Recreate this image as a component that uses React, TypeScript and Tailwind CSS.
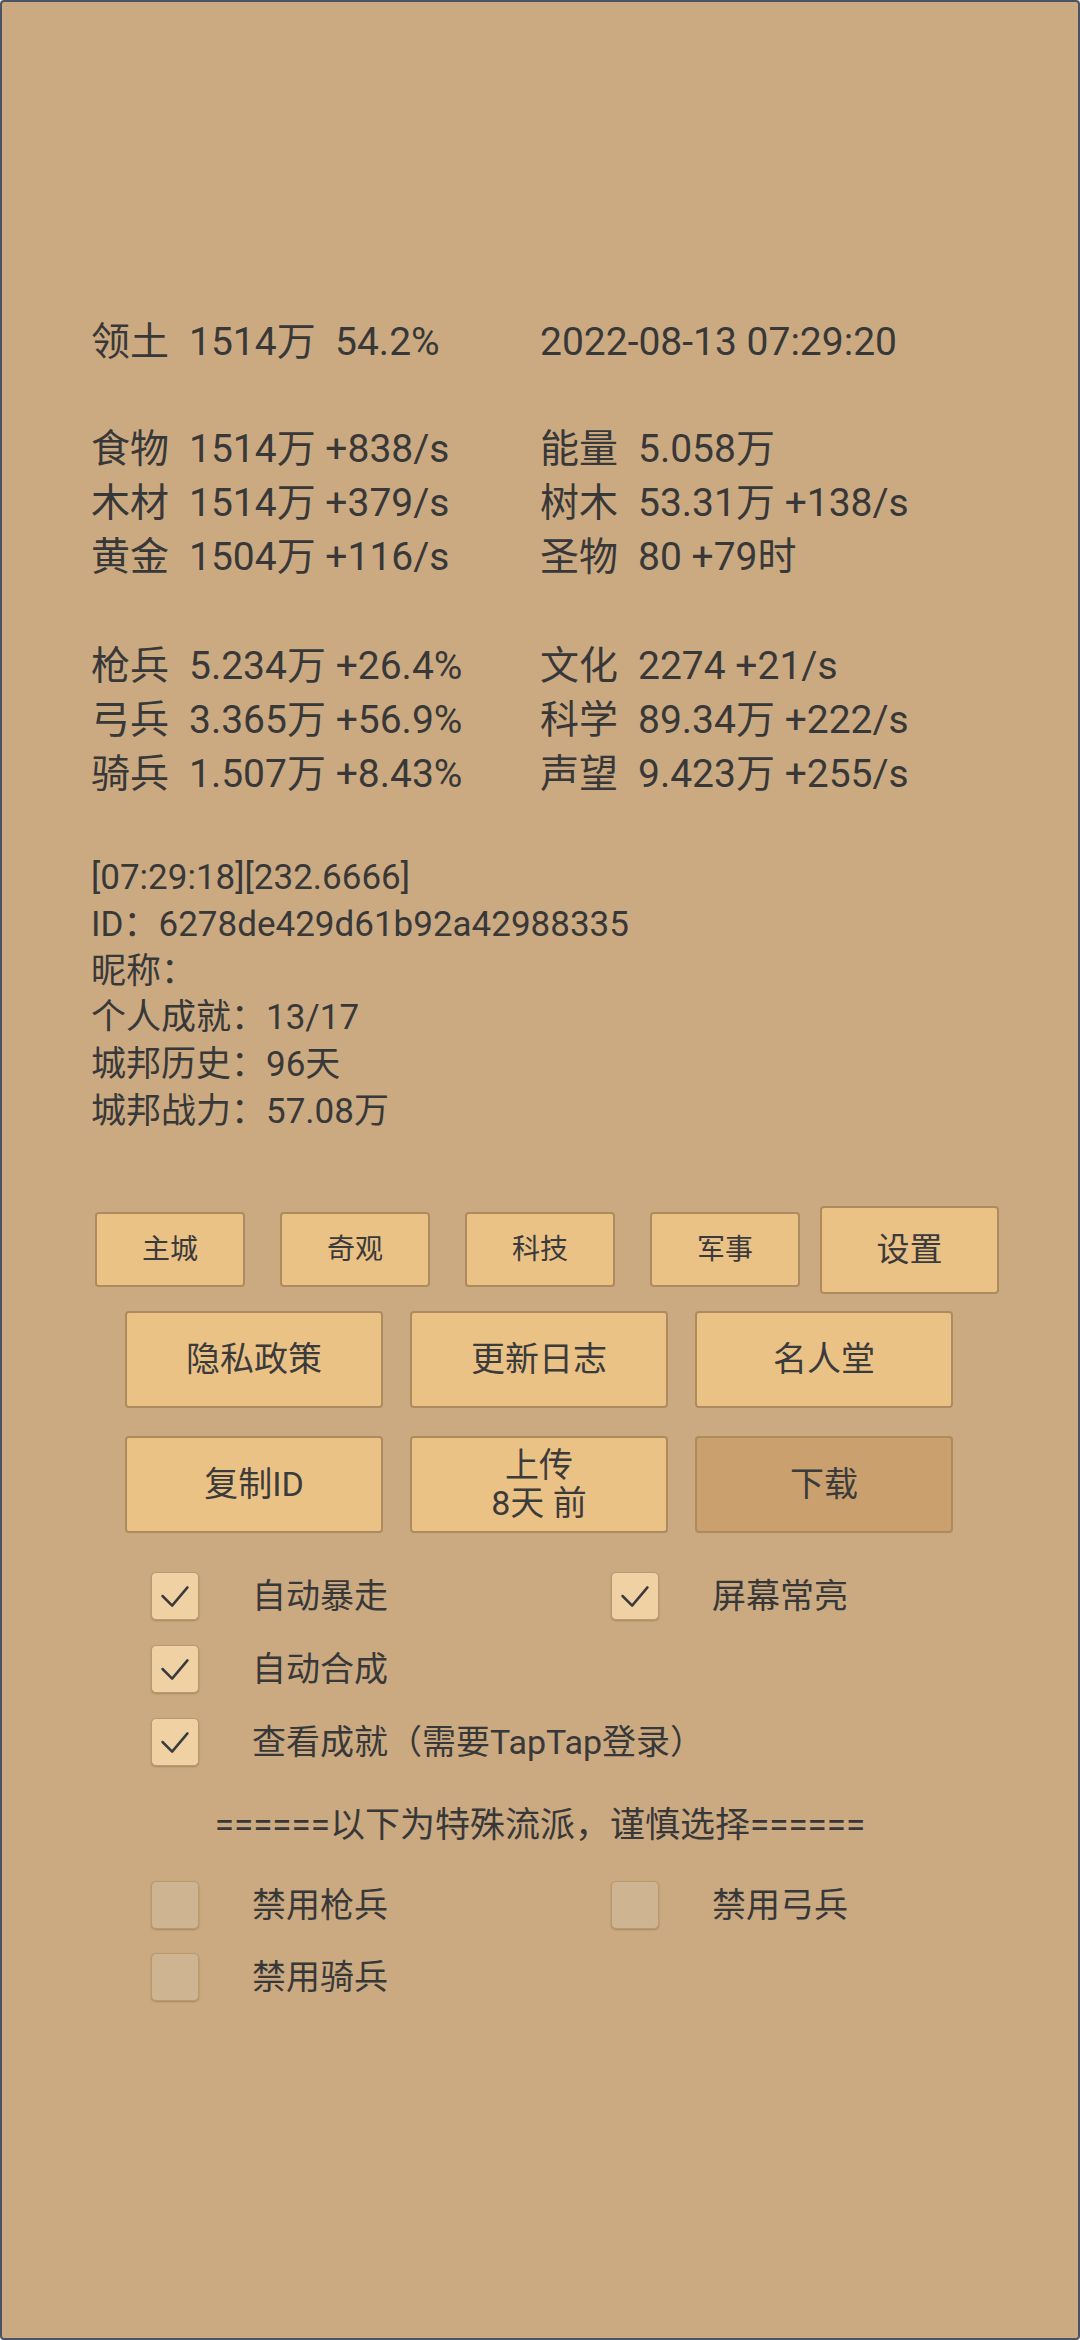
import React from "react"

const statBlocks: [string, string, string, string][][] = [
  [["领土", "1514万  54.2%", "", "2022-08-13 07:29:20"]],
  [
    ["食物", "1514万 +838/s", "能量", "5.058万"],
    ["木材", "1514万 +379/s", "树木", "53.31万 +138/s"],
    ["黄金", "1504万 +116/s", "圣物", "80 +79时"],
  ],
  [
    ["枪兵", "5.234万 +26.4%", "文化", "2274 +21/s"],
    ["弓兵", "3.365万 +56.9%", "科学", "89.34万 +222/s"],
    ["骑兵", "1.507万 +8.43%", "声望", "9.423万 +255/s"],
  ],
]

const info = [
  "[07:29:18][232.6666]",
  "ID：6278de429d61b92a42988335",
  "昵称：",
  "个人成就：13/17",
  "城邦历史：96天",
  "城邦战力：57.08万",
]

function Stat({ label, value }: { label: string; value: string }) {
  if (!label) return <span className="whitespace-pre">{value}</span>
  return (
    <div className="flex">
      <span className="w-[98px]">{label}</span>
      <span className="whitespace-pre">{value}</span>
    </div>
  )
}

function Btn({ children, className = "" }: { children: React.ReactNode; className?: string }) {
  return (
    <div
      className={
        "flex flex-col items-center justify-center rounded-[4px] border-2 border-[#ad8b5e] text-center text-[#3b3b3b] " +
        className
      }
    >
      {children}
    </div>
  )
}

function Check({ label, checked, wide }: { label: string; checked: boolean; wide?: boolean }) {
  return (
    <div className={"flex items-center " + (wide ? "w-[800px]" : "w-[460px]")}>
      <div
        className={
          "flex h-[48px] w-[48px] shrink-0 items-center justify-center rounded-[5px] border border-[#b89970] shadow-[0_1px_2px_rgba(120,90,50,0.45)] " +
          (checked ? "bg-[#efd1a4]" : "bg-[#cfb491]")
        }
      >
        {checked && (
          <svg width="48" height="48" viewBox="0 0 48 48">
            <polyline
              points="11,24 21,34 37,15"
              fill="none"
              stroke="#3a3a3a"
              strokeWidth="2.6"
              strokeLinecap="round"
              strokeLinejoin="round"
            />
          </svg>
        )}
      </div>
      <span className="ml-[53px] whitespace-nowrap">{label}</span>
    </div>
  )
}

export default function App() {
  return (
    <div className="box-border h-[2340px] w-[1080px] overflow-hidden rounded-[4px] border-2 border-[#4b5467] bg-[#cbaa82] font-['Roboto','Noto_Sans_CJK_SC',sans-serif] text-[#383838]">
      <div className="pl-[89px] pt-[313px] text-[39px] leading-[54px]">
        {statBlocks.map((block, i) => (
          <div key={i} className={i === 0 ? "" : i === 1 ? "mt-[53px]" : "mt-[55px]"}>
            {block.map((r, j) => (
              <div key={j} className="grid grid-cols-[449px_1fr]">
                <Stat label={r[0]} value={r[1]} />
                <Stat label={r[2]} value={r[3]} />
              </div>
            ))}
          </div>
        ))}
      </div>

      <div className="mt-[54px] pl-[89px] text-[35px] leading-[46.8px]">
        {info.map((t) => (
          <div key={t}>{t}</div>
        ))}
      </div>

      <div className="mt-[70px] flex h-[88px] items-center pl-[93px]">
        <div className="flex gap-[35px] text-[28px]">
          {["主城", "奇观", "科技", "军事"].map((t) => (
            <Btn key={t} className="h-[75px] w-[150px] bg-[#ebc286]">
              {t}
            </Btn>
          ))}
        </div>
        <Btn className="ml-[20px] h-[88px] w-[179px] bg-[#ebc286] text-[33px]">设置</Btn>
      </div>

      <div className="mt-[17px] flex gap-[27px] pl-[123px] text-[34px]">
        {["隐私政策", "更新日志", "名人堂"].map((t) => (
          <Btn key={t} className="h-[97px] w-[258px] bg-[#ebc286]">
            {t}
          </Btn>
        ))}
      </div>

      <div className="mt-[28px] flex gap-[27px] pl-[123px] text-[34px]">
        <Btn className="h-[97px] w-[258px] bg-[#ebc286]">复制ID</Btn>
        <Btn className="h-[97px] w-[258px] bg-[#ebc286] leading-[38px]">
          <span>上传</span>
          <span>8天 前</span>
        </Btn>
        <Btn className="h-[97px] w-[258px] bg-[#c9a06e]">下载</Btn>
      </div>

      <div className="mt-[38px] flex flex-col gap-[22px] pl-[149px] text-[34px]">
        <div className="flex">
          <Check label="自动暴走" checked />
          <Check label="屏幕常亮" checked />
        </div>
        <Check label="自动合成" checked />
        <Check label="查看成就（需要TapTap登录）" checked wide />
      </div>

      <div className="mt-[34px] text-center text-[35px] leading-[48px]">
        ======以下为特殊流派，谨慎选择======
      </div>

      <div className="mt-[30px] flex flex-col gap-[21px] pl-[149px] text-[34px]">
        <div className="flex">
          <Check label="禁用枪兵" checked={false} />
          <Check label="禁用弓兵" checked={false} />
        </div>
        <Check label="禁用骑兵" checked={false} />
      </div>
    </div>
  )
}
